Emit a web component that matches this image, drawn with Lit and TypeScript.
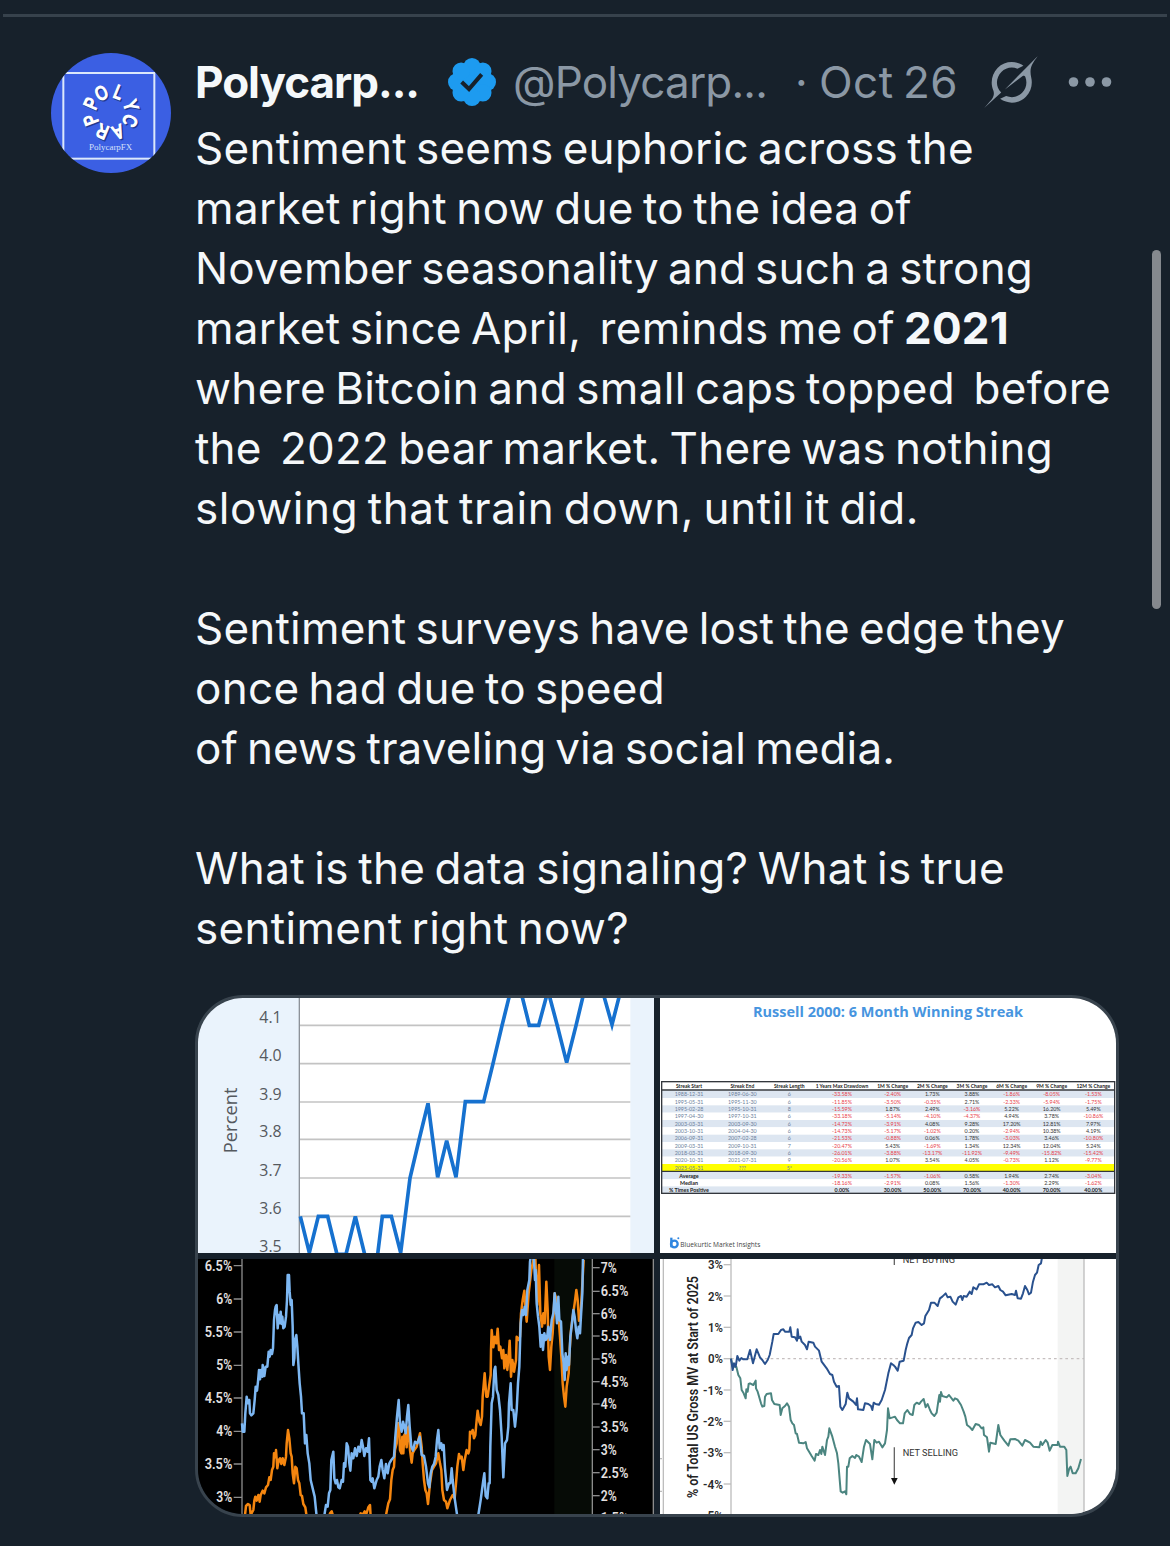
import { LitElement, html, svg, css } from 'lit';
import { customElement, property } from 'lit/decorators.js';

type Tick = [label: string, y: number];

// Text run stretched to a known width with letter-spacing.
@customElement('fit-text')
class FitText extends LitElement {
  @property({ type: Number }) width = 0;

  static styles = css`
    :host {
      display: inline-block;
      white-space: pre;
      word-spacing: -3.5px;
    }
  `;

  firstUpdated() {
    const natural = this.getBoundingClientRect().width;
    const count = (this.textContent ?? '').length;
    if (this.width && count) {
      this.style.letterSpacing = `${(this.width - natural) / count}px`;
    }
  }

  render() {
    return html`<slot></slot>`;
  }
}

@customElement('post-avatar')
class PostAvatar extends LitElement {
  static styles = css`
    :host {
      display: block;
      width: 120px;
      height: 120px;
      border-radius: 50%;
      overflow: hidden;
    }
    svg {
      display: block;
      width: 100%;
      height: 100%;
    }
    .letter {
      font: 58px 'Liberation Sans', sans-serif;
      fill: #fff;
      stroke: #fff;
      stroke-width: 4.5;
      text-anchor: middle;
    }
    .shadow {
      fill: #22398f;
      stroke: #22398f;
    }
    .brand {
      font: 27px 'Liberation Serif', serif;
      fill: #d5e0fa;
    }
  `;

  render() {
    const letters = ['P', 'O', 'L', 'Y', 'C', 'A', 'R', 'P'];
    const angles = [294, 334, 382, 432, 474, 519, 563, 609];
    const ring = (cls: string, d: number) =>
      letters.map(
        (l, i) => svg`<text class="letter ${cls}" y="-44"
          transform="translate(${179 + d} ${177 + d}) rotate(${angles[i]}) scale(0.78 1)">${l}</text>`
      );
    return html`
      <svg viewBox="0 0 360 360">
        <rect width="360" height="360" fill="#3b5fe3" />
        <rect x="37" y="60" width="273" height="257" fill="none" stroke="#dce8fb" stroke-width="6" />
        ${ring('shadow', 4)} ${ring('', 0)}
        <text class="brand" x="114" y="292" textLength="130">PolycarpFX</text>
      </svg>
    `;
  }
}

@customElement('percent-chart')
class PercentChart extends LitElement {
  static styles = css`
    :host,
    svg {
      display: block;
      width: 100%;
      height: 100%;
    }
    text {
      font-family: 'Open Sans', sans-serif;
      font-size: 49px;
      fill: #55595e;
    }
    .grid {
      stroke: #c3c3c3;
      stroke-width: 5;
    }
    .line {
      fill: none;
      stroke: #1671cf;
      stroke-width: 11;
    }
  `;

  render() {
    const ticks: Tick[] = [
      ['4.1', 106], ['4.0', 221], ['3.9', 336], ['3.8', 448], ['3.7', 564], ['3.6', 679], ['3.5', 794],
    ];
    return html`
      <svg viewBox="24 24 1368 765" preserveAspectRatio="none">
        <rect x="24" y="24" width="1368" height="765" fill="#eaf3fc" />
        <rect x="330" y="24" width="991" height="765" fill="#fff" />
        ${ticks.map(
          ([label, y]) => svg`
            <line class="grid" x1="330" x2="1321" y1=${y} y2=${y} />
            <text x="208" y=${y - 7} textLength="67" lengthAdjust="spacingAndGlyphs">${label}</text>`
        )}
        <line x1="328" x2="328" y1="24" y2="789" stroke="#8d9299" stroke-width="4" />
        <text transform="translate(141 490) rotate(-90)" style="font-size: 55px" textLength="198">Percent</text>
        <polyline
          class="line"
          points="331,679 358,788 385,679 413,679 441,793 468,793 496,679 524,793 551,850 563,793 577,679 604,679 632,788 660,564 687,450 714,340 743,562 770,452 798,562 826,335 881,335 909,221 936,107 964,-6 990,-6 1018,106 1046,106 1074,2 1102,107 1130,218 1158,107 1185,-6 1235,-6 1266,104 1294,-6"
        />
      </svg>
    `;
  }
}

@customElement('streak-table')
class StreakTable extends LitElement {
  static styles = css`
    :host,
    svg {
      display: block;
      width: 100%;
      height: 100%;
    }
    text {
      font-family: Lato, sans-serif;
      font-size: 16px;
      text-anchor: middle;
      fill: #333;
    }
    text.title {
      font-family: 'Open Sans', sans-serif;
      font-size: 43px;
      font-weight: 700;
      text-anchor: start;
      fill: #4795df;
    }
    text.head,
    text.strong {
      font-weight: 700;
      fill: #222;
    }
    text.head {
      font-size: 15px;
    }
    text.date {
      fill: #6c7f9c;
    }
    text.neg {
      fill: #e8404a;
    }
    text.brand {
      font-size: 22px;
      font-family: 'Open Sans', sans-serif;
      text-anchor: start;
      fill: #444;
    }
    .rule {
      stroke: #33373d;
      stroke-width: 4;
    }
  `;

  private columns = [102, 262, 403, 561, 713, 832, 951, 1070, 1190, 1315];

  private head = [
    'Streak Start', 'Streak End', 'Streak Length', '1 Years Max Drawdown', '1M % Change',
    '2M % Change', '3M % Change', '6M % Change', '9M % Change', '12M % Change',
  ];

  private rows = [
    '1988-12-31|1989-06-30|6|-33.58%|-2.40%|1.73%|3.88%|-1.86%|-8.05%|-1.53%',
    '1995-05-31|1995-11-30|6|-11.85%|-3.50%|-0.35%|2.71%|-2.33%|-5.94%|-1.75%',
    '1995-02-28|1995-10-31|8|-15.59%|1.87%|2.49%|-3.16%|5.22%|16.20%|5.49%',
    '1997-04-30|1997-10-31|6|-33.18%|-5.14%|-4.10%|-4.37%|4.94%|3.78%|-10.86%',
    '2003-03-31|2003-09-30|6|-14.72%|-3.91%|4.08%|9.28%|17.20%|12.81%|7.97%',
    '2003-10-31|2004-04-30|6|-14.73%|-5.17%|-1.02%|0.20%|-2.94%|10.38%|4.19%',
    '2006-09-31|2007-02-28|6|-21.53%|-0.88%|0.06%|1.78%|-3.03%|3.46%|-10.80%',
    '2009-03-31|2009-10-31|7|-20.47%|5.43%|-1.69%|1.34%|12.34%|12.04%|5.24%',
    '2018-03-31|2018-09-30|6|-26.01%|-3.88%|-13.17%|-11.92%|-9.49%|-15.82%|-15.42%',
    '2020-10-31|2021-07-31|9|-20.56%|1.07%|3.54%|4.05%|-0.73%|1.12%|-9.77%',
    '2025-05-31|???|5*|||||||',
    'Average|||-19.33%|-1.57%|-1.06%|0.58%|1.94%|2.74%|-3.04%',
    'Median|||-18.16%|-2.91%|0.08%|1.56%|-1.30%|2.29%|-1.62%',
    '% Times Positive|||0.00%|30.00%|50.00%|70.00%|40.00%|70.00%|40.00%',
  ];

  private cellClass(value: string, row: number, col: number) {
    if (row === 13 || (row > 10 && col === 0)) return 'strong';
    if (col < 3) return 'date';
    return value.startsWith('-') ? 'neg' : '';
  }

  private rowTop(row: number) {
    return row > 10 ? 546 + (row - 11) * 21.6 : 302 + row * 22;
  }

  render() {
    return html`
      <svg viewBox="15 24 1368 765" preserveAspectRatio="none">
        <rect x="15" y="24" width="1368" height="765" fill="#fff" />
        <text class="title" x="294" y="82" textLength="810" lengthAdjust="spacingAndGlyphs">
          Russell 2000: 6 Month Winning Streak
        </text>
        ${this.head.map((h, i) => svg`<text class="head" x=${this.columns[i]} y="294">${h}</text>`)}
        ${this.rows.map((row, r) => {
          const top = this.rowTop(r);
          const fill = r === 10 ? '#ffff00' : r % 2 === (r > 10 ? 1 : 0) ? '#dde6f1' : '#fff';
          return svg`
            <rect x="21" y=${top} width="1357" height="22" fill=${fill} />
            ${row.split('|').map(
              (value, c) => svg`<text class=${this.cellClass(value, r, c)} x=${this.columns[c]} y=${top + 17}>${value}</text>`
            )}`;
        })}
        <rect class="rule" x="20" y="275" width="1359" height="335" fill="none" />
        <line class="rule" x1="20" x2="1379" y1="300" y2="300" />
        <line class="rule" x1="20" x2="1379" y1="544" y2="544" />
        <g fill="none" stroke="#2f86e0" stroke-width="7">
          <path d="M49 743V772" />
          <circle cx="58" cy="762" r="10" />
        </g>
        <circle cx="70" cy="745" r="3" fill="#2f86e0" />
        <text class="brand" x="76" y="770" textLength="240" lengthAdjust="spacingAndGlyphs">
          Bluekurtic Market Insights
        </text>
      </svg>
    `;
  }
}

@customElement('spread-chart')
class SpreadChart extends LitElement {
  static styles = css`
    :host,
    svg {
      display: block;
      width: 100%;
      height: 100%;
    }
    text {
      font-family: Roboto, sans-serif;
      font-size: 43px;
      font-weight: 600;
      fill: #e4e0e0;
    }
    .axis {
      stroke: #8c8c8c;
      stroke-width: 4;
    }
    .line {
      fill: none;
      stroke-width: 7.5;
      stroke-linejoin: round;
    }
    .orange {
      stroke: #f5860f;
    }
    .blue {
      stroke: #7db7f2;
    }
  `;

  private left: Tick[] = [
    ['6.5%', 47], ['6%', 147], ['5.5%', 246], ['5%', 346], ['4.5%', 444], ['4%', 544], ['3.5%', 642], ['3%', 742],
  ];

  private right: Tick[] = [
    ['7%', 53], ['6.5%', 124], ['6%', 191], ['5.5%', 258], ['5%', 327], ['4.5%', 395],
    ['4%', 462], ['3.5%', 531], ['3%', 599], ['2.5%', 668], ['2%', 737], ['1.5%', 804],
  ];

  render() {
    const width = (label: string) => (label.length > 2 ? 83 : 48);
    return html`
      <svg viewBox="24 27 1368 765" preserveAspectRatio="none">
        <rect x="24" y="27" width="1368" height="765" fill="#000" />
        <rect x="1093" y="27" width="114" height="765" fill="#060b06" />
        ${this.left.map(
          ([label, y]) => svg`
            <line class="axis" x1="131" x2="156" y1=${y} y2=${y} />
            <text x=${127 - width(label)} y=${y + 15} textLength=${width(label)} lengthAdjust="spacingAndGlyphs">${label}</text>`
        )}
        ${this.right.map(
          ([label, y]) => svg`
            <line class="axis" x1="1207" x2="1229" y1=${y} y2=${y} />
            <text x="1232" y=${y + 15} textLength=${width(label)} lengthAdjust="spacingAndGlyphs">${label}</text>`
        )}
        <line class="axis" x1="156" x2="156" y1="27" y2="792" />
        <line class="axis" x1="1207" x2="1207" y1="27" y2="792" />
        <line class="axis" x1="1390" x2="1390" y1="27" y2="792" />
        <polyline
          class="line orange"
          points="165,795 168,768 174,762 179,765 182,795 190,780 193,752 196,740 200,752 205,735 209,755 212,735 218,722 223,730 228,712 234,705 238,682 242,690 246,660 250,650 252,610 256,622 258,600 262,655 266,630 270,625 274,642 278,625 283,645 288,620 290,580 294,540 298,565 302,610 305,620 308,670 312,700 316,650 320,655 324,690 328,700 332,735 336,738 340,762 346,772 350,800 380,850 415,810 420,790 425,784 430,800 460,830 500,820 512,790 518,794 524,784 529,792 535,772 540,765 542,800 560,830 580,830 588,795 595,760 600,748 604,690 608,660 612,650 615,600 620,580 623,520 627,520 630,600 634,610 637,560 640,610 643,555 646,550 650,592 653,535 656,530 660,600 665,638 668,610 673,600 680,590 685,570 690,550 695,590 698,640 702,690 706,720 710,730 714,762 720,700 726,660 732,650 738,640 745,610 750,640 754,660 757,720 762,750 768,755 772,775 780,750 788,735 794,745 798,700 802,650 807,612 811,625 815,620 820,660 824,630 830,600 835,610 838,600 840,545 844,550 848,540 852,565 856,555 860,510 863,482 868,515 872,525 876,500 878,440 884,370 889,440 893,440 897,410 902,375 903,300 905,240 910,292 914,260 919,280 923,236 927,300 931,290 936,325 940,300 943,355 948,315 952,360 956,315 959,272 963,380 967,330 972,365 978,330 980,260 986,270 990,260 993,190 998,150 1003,122 1007,180 1010,215 1016,130 1024,60 1030,30 1036,20 1039,100 1042,165 1047,45 1051,190 1056,230 1060,190 1064,220 1069,95 1073,180 1076,320 1080,360 1084,290 1088,250 1094,130 1100,150 1105,190 1110,260 1114,320 1118,400 1122,440 1126,470 1130,410 1136,370 1139,300 1143,240 1148,200 1154,160 1159,120 1163,150 1167,212 1172,190 1176,120 1181,30"
        />
        <polyline
          class="line blue"
          points="156,520 158,545 163,545 166,490 170,440 174,460 178,450 180,490 184,496 190,490 194,450 197,410 201,422 204,395 207,360 210,388 213,360 217,380 218,345 223,378 227,350 232,350 236,305 239,320 242,300 246,312 249,295 252,210 255,180 257,170 260,165 263,235 266,195 269,220 272,185 275,222 277,200 280,235 284,230 288,200 291,150 293,75 297,75 299,125 302,165 305,150 308,230 310,345 313,325 315,270 319,255 322,290 325,340 329,400 333,440 336,490 341,490 345,580 349,555 353,610 358,640 362,690 368,715 374,740 380,800 390,850 400,850 404,790 408,765 413,770 417,730 421,720 424,630 430,605 433,685 437,700 441,690 445,712 449,715 455,690 459,695 462,640 466,650 470,580 474,590 478,640 481,662 485,610 490,625 495,595 500,618 505,590 510,605 515,570 519,590 523,618 528,595 533,605 537,565 541,690 545,695 548,685 553,715 560,690 565,680 569,650 574,630 578,660 583,685 588,642 593,670 598,640 604,630 612,620 616,560 621,500 626,450 630,520 635,545 639,515 643,530 647,550 651,500 655,465 659,530 664,590 669,602 675,575 682,580 689,560 695,615 702,618 708,650 714,700 718,712 722,670 727,650 732,642 737,620 741,570 745,540 749,595 754,580 757,600 761,585 765,655 771,720 777,700 781,700 785,655 788,690 794,745 802,800 820,860 850,860 865,795 872,750 876,720 880,690 883,670 887,738 892,745 896,700 899,700 901,590 905,460 909,440 913,360 916,350 920,420 925,435 930,480 935,560 940,682 945,580 951,570 955,530 957,460 962,400 965,480 970,480 975,530 980,480 984,400 988,350 992,220 996,180 1000,195 1004,170 1008,195 1012,120 1018,90 1020,35 1024,10 1032,30 1035,90 1037,60 1040,160 1044,200 1048,230 1052,290 1056,255 1059,300 1063,250 1067,270 1071,265 1075,230 1080,270 1085,210 1090,190 1094,130 1098,180 1101,220 1105,140 1108,210 1113,215 1117,310 1121,340 1124,390 1127,310 1130,360 1134,320 1137,345 1141,260 1146,220 1150,180 1154,200 1158,240 1162,265 1166,230 1170,250 1174,180 1177,130 1179,20"
        />
      </svg>
    `;
  }
}

@customElement('flow-chart')
class FlowChart extends LitElement {
  static styles = css`
    :host,
    svg {
      display: block;
      width: 100%;
      height: 100%;
    }
    text {
      font-family: Roboto, sans-serif;
      fill: #2c2c2c;
    }
    .tick {
      font-size: 41px;
      font-weight: 600;
    }
    .title {
      font-size: 42px;
      font-weight: 600;
      fill: #222;
    }
    .note {
      font-size: 28px;
      fill: #333;
    }
    .axis {
      stroke: #bdbdbd;
      stroke-width: 4;
    }
    .line {
      fill: none;
      stroke-width: 6;
      stroke-linejoin: round;
    }
  `;

  private ticks: Tick[] = [
    ['3%', 44], ['2%', 138], ['1%', 232], ['0%', 326], ['-1%', 420],
    ['-2%', 514], ['-3%', 608], ['-4%', 702], ['-5%', 796],
  ];

  render() {
    const width = (label: string) => (label.length > 2 ? 60 : 45);
    return html`
      <svg viewBox="15 27 1368 765" preserveAspectRatio="none">
        <rect x="15" y="27" width="1368" height="765" fill="#fff" />
        <rect x="1208" y="27" width="79" height="765" fill="#f3f4f3" />
        <line class="axis" x1="25" x2="25" y1="27" y2="792" />
        <line class="axis" x1="15" x2="21" y1="626" y2="626" />
        <line class="axis" x1="15" x2="21" y1="724" y2="724" />
        <line x1="228" x2="1287" y1="326" y2="326" stroke="#c6c0c0" stroke-width="4" stroke-dasharray="8 9" />
        ${this.ticks.map(
          ([label, y]) => svg`
            <line class="axis" x1="206" x2="228" y1=${y} y2=${y} />
            <text class="tick" x=${204 - width(label)} y=${y + 14} textLength=${width(label)} lengthAdjust="spacingAndGlyphs">${label}</text>`
        )}
        <line class="axis" x1="228" x2="228" y1="27" y2="792" />
        <line class="axis" x1="1287" x2="1287" y1="27" y2="792" />
        <text class="title" transform="translate(130 744) rotate(-90)" textLength="666" lengthAdjust="spacingAndGlyphs">
          % of Total US Gross MV at Start of 2025
        </text>
        <polyline
          class="line"
          stroke="#4b8580"
          points="228,326 233,350 244,350 250,375 256,385 260,420 266,430 272,445 274,418 278,425 281,402 285,400 295,405 302,392 303,415 308,425 318,460 322,470 328,468 330,440 335,432 348,430 351,450 358,462 374,465 377,495 382,475 390,468 396,460 402,470 407,510 412,520 417,525 422,550 426,552 432,578 445,580 452,576 456,595 470,618 479,632 483,612 490,615 495,600 499,612 502,590 510,615 516,570 520,560 523,535 532,560 540,590 546,610 550,640 557,724 563,728 570,724 574,733 576,650 580,650 584,625 592,618 600,624 604,615 612,620 620,636 627,590 633,570 645,582 652,628 658,570 665,578 672,575 682,592 690,580 696,540 699,475 704,505 720,500 726,510 735,520 744,520 749,490 757,480 765,492 773,495 778,465 785,458 793,462 798,455 806,447 812,472 818,462 825,480 830,490 838,498 845,488 849,460 853,435 855,455 858,426 862,438 875,442 882,435 895,452 900,445 907,448 918,465 926,485 931,500 936,525 945,532 952,540 962,522 972,525 980,535 985,532 987,555 996,562 1002,605 1006,578 1022,582 1030,525 1036,555 1048,572 1060,587 1066,568 1080,567 1090,572 1102,587 1110,570 1125,578 1135,590 1153,592 1157,575 1162,585 1172,570 1178,578 1184,602 1192,585 1208,585 1209,575 1215,590 1228,590 1234,600 1237,678 1243,655 1247,650 1253,670 1262,670 1270,655 1278,627"
        />
        <polyline
          class="line"
          stroke="#29518e"
          points="228,326 233,360 237,340 242,350 247,318 253,332 259,324 265,328 277,328 285,300 294,340 305,298 315,322 322,330 330,342 338,330 344,315 352,275 356,252 370,252 378,240 385,238 390,245 403,245 406,232 410,260 420,262 426,272 428,238 431,265 436,260 440,275 450,285 456,298 461,275 475,278 480,290 492,302 500,335 515,355 525,372 532,375 537,395 545,410 552,408 556,470 562,480 572,462 577,428 582,445 595,455 603,465 606,445 609,478 625,480 630,460 640,462 648,468 652,480 656,458 662,462 672,464 680,450 690,420 700,370 708,340 715,345 720,350 728,362 734,335 746,332 752,300 757,280 762,264 770,255 774,235 782,218 790,216 800,225 807,220 811,198 822,180 828,158 838,158 848,168 855,145 862,140 872,130 878,142 886,140 893,155 902,164 910,142 918,138 922,150 926,138 935,140 944,125 950,132 955,112 965,118 972,103 985,103 995,98 1002,105 1012,103 1020,112 1030,108 1036,120 1044,125 1052,136 1070,132 1080,135 1083,122 1088,145 1098,146 1104,130 1110,108 1117,120 1122,133 1128,128 1134,95 1140,75 1146,68 1151,45 1158,40 1161,22"
        />
        <g stroke="#666" stroke-width="4">
          <line x1="718" x2="718" y1="27" y2="45" />
          <line x1="718" x2="718" y1="592" y2="688" />
        </g>
        <path d="M708 684H728L718 704Z" fill="#111" />
        <text class="note" x="743" y="39" textLength="157" lengthAdjust="spacingAndGlyphs">NET BUYING</text>
        <text class="note" x="743" y="617" textLength="166" lengthAdjust="spacingAndGlyphs">NET SELLING</text>
      </svg>
    `;
  }
}

@customElement('app-root')
class AppRoot extends LitElement {
  static styles = css`
    :host {
      display: block;
      position: relative;
      box-sizing: border-box;
      width: 1170px;
      height: 1546px;
      padding-top: 14px;
      overflow: hidden;
      background: #17212b;
      color: #f5f8fa;
      font-family: Inter, 'Liberation Sans', sans-serif;
      font-size: 44px;
    }
    .divider {
      height: 3px;
      margin: 0 3px;
      background: #37424c;
    }
    .scrollbar {
      position: absolute;
      top: 250px;
      right: 9px;
      width: 9px;
      height: 359px;
      border-radius: 5px;
      background: #85898e;
    }
    .post {
      display: grid;
      grid-template-columns: 120px 924px;
      column-gap: 24px;
      padding: 36px 51px 0;
    }
    .body {
      min-width: 0;
    }
    .header {
      display: flex;
      align-items: center;
      height: 58px;
      line-height: 58px;
      white-space: nowrap;
      color: #8b98a5;
    }
    .name {
      width: 253px;
      font-weight: 700;
      color: #f5f8fa;
    }
    .badge {
      width: 48px;
      height: 48px;
      margin-right: 17px;
    }
    .handle {
      width: 282px;
    }
    .dot {
      width: 24px;
    }
    .date {
      width: 165px;
    }
    .grok {
      width: 54px;
      height: 52px;
      fill: #8b98a5;
    }
    .more {
      width: 44px;
      height: 12px;
      margin-left: 30px;
      fill: #8b98a5;
    }
    .text {
      padding-top: 7px;
    }
    .row {
      height: 60px;
      line-height: 60px;
      white-space: nowrap;
    }
    .row b {
      font-weight: 700;
    }
    .media {
      display: grid;
      grid-template-columns: 456px 456px;
      grid-template-rows: 255px 255px;
      gap: 6px;
      box-sizing: border-box;
      width: 924px;
      height: 522px;
      margin-top: 37px;
      border: 3px solid #38434d;
      border-radius: 48px;
      overflow: hidden;
    }
  `;

  private lines = [
    { text: 'Sentiment seems euphoric across the', width: 779 },
    { text: 'market right now due to the idea of', width: 717 },
    { text: 'November seasonality and such a strong', width: 838 },
    { text: 'market since April,  reminds me of ', width: 709, bold: '2021', boldWidth: 105 },
    { text: 'where Bitcoin and small caps topped  before', width: 916 },
    { text: 'the  2022 bear market. There was nothing', width: 858 },
    { text: 'slowing that train down, until it did.', width: 724 },
    { text: '', width: 0 },
    { text: 'Sentiment surveys have lost the edge they', width: 870 },
    { text: 'once had due to speed', width: 470 },
    { text: 'of news traveling via social media.', width: 700 },
    { text: '', width: 0 },
    { text: 'What is the data signaling? What is true', width: 810 },
    { text: 'sentiment right now?', width: 434 },
  ];

  render() {
    const scallops = [0, 45, 90, 135, 180, 225, 270, 315];
    return html`
      <div class="divider"></div>
      <div class="scrollbar"></div>
      <article class="post">
        <post-avatar></post-avatar>
        <div class="body">
          <div class="header">
            <div class="name"><fit-text width="224">Polycarp...</fit-text></div>
            <svg class="badge" viewBox="-72 -72 144 144">
              <g fill="#1d9bf0">
                <circle r="52" />
                ${scallops.map((a) => svg`<circle cy="-46" r="26" transform="rotate(${a})" />`)}
              </g>
              <path d="M-31 0L-9 21L29 -23" fill="none" stroke="#17212b" stroke-width="12" />
            </svg>
            <div class="handle"><fit-text width="254">@Polycarp...</fit-text></div>
            <div class="dot">·</div>
            <div class="date"><fit-text width="139">Oct 26</fit-text></div>
            <svg class="grok" viewBox="0 0 33 32">
              <path
                d="M12.745 20.54l10.97-8.19c.539-.4 1.307-.244 1.564.38 1.349 3.288.746 7.241-1.938 9.955-2.683 2.714-6.417 3.31-9.83 1.954l-3.728 1.745c5.347 3.697 11.84 2.782 15.898-1.324 3.219-3.255 4.216-7.692 3.284-11.693l.008.009c-1.351-5.878.332-8.227 3.782-13.031L33 0l-4.54 4.59v-.014L12.743 20.544m-2.263 1.987c-3.837-3.707-3.175-9.446.1-12.755 2.42-2.449 6.388-3.448 9.852-1.979l3.72-1.737c-.67-.49-1.53-1.017-2.515-1.387-4.455-1.854-9.789-.931-13.41 2.728-3.483 3.523-4.579 8.94-2.697 13.561 1.405 3.454-.899 5.898-3.22 8.364C1.49 30.2.666 31.074 0 32l10.478-9.466"
              />
            </svg>
            <svg class="more" viewBox="0 0 44 12">
              <circle cx="5.5" cy="6" r="4.8" />
              <circle cx="22" cy="6" r="4.8" />
              <circle cx="38.5" cy="6" r="4.8" />
            </svg>
          </div>
          <div class="text">
            ${this.lines.map(
              (line) => html`<div class="row"><fit-text .width=${line.width}>${line.text}</fit-text>${line.bold
                ? html`<b><fit-text .width=${line.boldWidth}>${line.bold}</fit-text></b>`
                : ''}</div>`
            )}
          </div>
          <div class="media">
            <percent-chart></percent-chart>
            <streak-table></streak-table>
            <spread-chart></spread-chart>
            <flow-chart></flow-chart>
          </div>
        </div>
      </article>
    `;
  }
}

declare global {
  interface HTMLElementTagNameMap {
    'app-root': AppRoot;
    'fit-text': FitText;
    'post-avatar': PostAvatar;
    'percent-chart': PercentChart;
    'streak-table': StreakTable;
    'spread-chart': SpreadChart;
    'flow-chart': FlowChart;
  }
}
